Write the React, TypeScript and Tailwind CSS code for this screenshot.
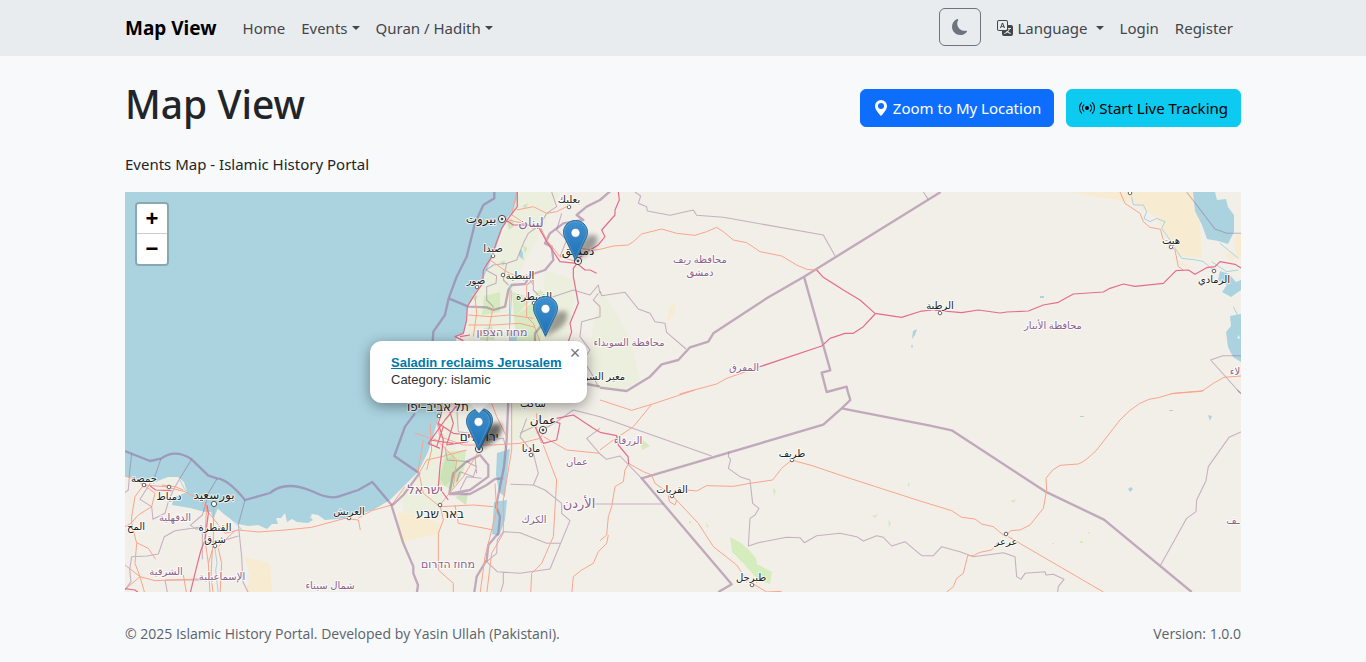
import { BsBroadcast, BsGeoAltFill, BsMoonFill, BsTranslate } from "react-icons/bs";

type Kind = "nation" | "admin" | "motorway" | "trunk" | "river";

const LINE_STYLE: Record<Kind, { stroke: string; width: number; opacity: number }> = {
  nation: { stroke: "#8f6390", width: 7, opacity: 0.5 },
  admin: { stroke: "#8f6390", width: 3.2, opacity: 0.45 },
  motorway: { stroke: "#e46d8c", width: 3.6, opacity: 1 },
  trunk: { stroke: "#f8a58c", width: 3, opacity: 1 },
  river: { stroke: "#aad3df", width: 3, opacity: 1 },
};

// Each sheet holds its lines at three units per screen pixel, from its own corner.
const SHEETS: { x: number; y: number; lines: [Kind, string][] }[] = [
  {
    x: 125,
    y: 390,
    lines: [
      ["admin", "M20 192L14 245L10 300L0 308M108 206L90 258L45 328L80 350L84 388L120 370L130 335L145 300L165 265L200 208M276 266L250 310L240 350L232 375L196 406L215 418L232 410L232 508M360 330L340 404L350 500L354 576L372 612M232 410L150 422L118 440L100 492L66 498L20 500L14 540L18 575L0 600M120 570L128 612M120 570L270 570M232 460L300 450L340 438"],
      ["trunk", "M0 258L30 268L56 285L120 290L180 305L235 335L245 360L300 430L340 420L400 426L480 420L560 412L660 385L700 390L706 420M700 384L740 362L800 345L840 290M110 285L150 290L175 300M245 345L240 450L250 520L255 612M266 350L265 460L262 480L250 520M56 285L30 320L20 380L20 400L35 460L30 520L45 560L90 572L190 568L290 565M56 285L90 310L80 350L40 375L18 400L0 410M0 525L45 560L10 590L0 600M35 458L70 475L92 508M45 560L60 612M175 555L185 612M280 470L300 450L330 422M280 475L290 520L285 612M262 480L258 560L265 612"],
      ["motorway", "M246 345L250 370L240 450L228 480L215 530L195 612M75 288L92 300L140 302M0 596L30 600L45 612"],
      ["river", "M270 475L276 520L272 540L280 612M165 270L180 300L230 330M440 396L470 370L520 358L560 380M350 420L345 412L300 370"],
      ["nation", "M0 183L75 213L108 206Q150 175 200 208L250 257L276 265Q310 268 360 330L435 309Q480 270 560 303Q610 328 640 320L700 300L742 276L800 345"],
    ],
  },
  {
    x: 360,
    y: 190,
    lines: [
      ["nation", "M403 6L403 25L370 45L345 100L320 200L290 260L266 325L255 375L220 425L218 455M266 325L325 350L380 352L400 360L435 350L445 300L455 285L495 282L510 255L555 240L580 210L575 170L555 160L570 130L610 100L670 90L650 75L680 50L720 30L755 0"],
      ["admin", "M445 285L430 270L440 220L400 225L378 240L410 258L408 280L380 290L380 330L400 350M440 220L470 210L490 160L505 130L540 105L560 70L590 50L575 6M605 70L590 120L620 150L600 200M500 285L520 270L520 300L545 325L580 320L640 300L690 315L715 285L720 310M715 310L700 330L720 350L720 380L665 395L660 440L690 480L670 510L700 560L715 590"],
      ["trunk", "M445 90L490 100L540 110L560 150L600 200L650 215M470 60L520 50L560 70L590 65L620 50M390 210L440 245L470 260L500 255L520 285M325 375L390 380L450 375L520 385M325 405L400 405L480 400L525 412M345 320L350 370L340 440M450 300L448 380L450 455M500 285L500 380L520 400L540 455M400 350L390 400L380 455M470 6L455 75L520 115M655 175L705 180L720 178M500 330L520 320L540 350"],
      ["motorway", "M472 6L472 50L445 85L425 115L410 155L395 200L370 240L368 280L340 320L322 350L320 390L310 430L285 440L310 452M430 85L460 105L500 105L535 110L560 155L600 215L650 220L675 240L690 240L710 250M655 215L640 235L640 260L655 340L630 400L635 425L625 455M775 6L778 30L765 60L765 75L725 120L735 140L715 165L690 180L655 205M300 440L330 435"],
      ["river", "M450 285L455 310L450 400M485 180L490 210"],
      ["nation", "M525 455L525 430L550 400L535 350M680 582L720 590"],
    ],
  },
  {
    x: 360,
    y: 390,
    lines: [
      ["nation", "M165 70L135 110L103 198L178 250L130 315L95 348L130 460L160 530L160 550L174 585L170 612M445 30L440 150L432 230L408 350L420 380L415 430L385 465L380 510L350 560L342 612M268 310L280 250L320 215L360 195L385 225L385 260L330 300L268 312L330 312L380 285L405 267L430 265"],
      ["admin", "M290 50L295 125L330 130M290 275L300 245L340 260L350 230L320 215M300 300L320 260L365 265M345 200L350 250M500 85L480 140L520 190L535 250L520 285L452 283M520 285L555 300L605 340L605 370L630 392L570 537L480 550L412 545L380 515L410 490L412 450L430 425L480 428L560 460L600 460M480 130L520 110L545 80M530 130L590 95L640 60L720 80M720 115L680 145L720 192M705 342L720 342M430 545L430 580L420 612M255 170L262 210L330 215M380 150L430 145L440 180"],
      ["trunk", "M230 90L240 140L310 165L400 165L480 160L540 145L550 130M180 245L200 210L245 200L320 180M165 130L230 150L290 210L280 290M190 150L175 240L190 310L240 350L340 345L400 350M355 185L310 260L260 320L240 345L250 390L235 430L235 540L280 580L280 612M285 345L295 400L375 415L400 420M405 280L410 360L375 500L360 612M455 40L455 180L430 330L430 430L395 490L380 612M550 165L590 270L580 440L545 520L515 550L512 612M550 140L620 180L720 190M745 435L740 460L715 485L700 520L665 540L640 560L635 612M530 70L530 120L545 160M210 100L215 180L200 240M365 40L350 90L370 170M395 40L410 80L440 140"],
      ["motorway", "M250 50L235 100L250 150L240 230L235 290L265 330M235 100L280 130L325 135L350 150M300 35L255 90L205 160L240 175M265 50L280 100L260 165L325 155M525 110L550 160L590 150L600 100L570 90M590 85L640 75L700 115L720 127M210 150L280 160M250 110L230 170"],
    ],
  },
  {
    x: 600,
    y: 190,
    lines: [
      ["nation", "M1022 6L612 260L500 325L340 430L325 455L270 472L235 510L185 523L150 560L80 603L0 593M612 260L691 541L665 548L680 606L740 590L742 600"],
      ["admin", "M105 6L122 18L115 40L140 50L142 63L210 76L280 60L290 76L370 82L670 135L705 197M0 303L5 317L75 307L115 357L150 370L165 395L195 400L200 427L258 477M970 6L985 28"],
      ["trunk", "M0 178L40 168L85 165L100 155L125 132L185 117L230 130L285 136L320 125L350 112L370 125L400 150L440 158L480 185L545 198L590 225L620 238L650 240M238 612L350 582L380 565L480 530"],
      ["motorway", "M650 240L670 262L730 300L780 330L825 370L905 382L955 366L960 365M825 372L790 410L760 430L735 430L690 445L665 468L480 530"],
    ],
  },
  {
    x: 600,
    y: 390,
    lines: [
      ["nation", "M742 0L751 30L725 55L670 104L125 265L395 583L355 606M725 55L990 107"],
      ["admin", "M0 80L335 198M387 185L385 200L392 208L385 235L420 260L450 270L458 340L477 355L465 375L450 385L445 468L475 458L560 442L600 443L613 458L650 437L720 430L770 440L790 453L830 437L850 442L875 468L915 455L965 497M0 342L190 342M0 192L20 208L60 198L125 265"],
      ["trunk", "M0 30L95 61L155 43L285 0M155 43L100 110L40 150L0 180M85 220L130 245L155 255L165 280L215 315L295 400L340 470L410 525L440 570L500 606L545 604M205 315L208 335L225 345L230 330M260 300L290 303L320 287L400 289L450 280L518 270L545 235L575 210L640 228L725 257L960 333M85 222L75 240L70 275L45 290L35 350L25 380L20 435L0 452"],
      ["motorway", "M0 127L50 137L55 165L84 200L86 222"],
    ],
  },
  {
    x: 920,
    y: 190,
    lines: [
      ["admin", "M800 6L885 117L920 130L963 130M963 497L908 497L872 510L963 612"],
      ["river", "M635 20L640 45L670 45L680 65L672 85L690 95L710 85L735 95L725 115L750 150L785 205L830 210L850 215L880 240M900 160L955 205M940 350L955 380M875 215L920 245L955 240"],
      ["trunk", "M600 6L615 40L660 70L670 95L690 112L722 118L728 145L765 180L775 230L790 240M752 611L845 604L880 580L912 562L963 558"],
      ["motorway", "M0 364L35 360L125 368L175 360L240 369L260 366L325 363L370 345L415 337L460 312L550 306L570 295L610 282L645 289L730 280L768 242L805 240L825 253L860 233L885 230L900 215L945 223L963 234"],
    ],
  },
  {
    x: 920,
    y: 390,
    lines: [
      ["nation", "M30 107L95 121L375 304L552 389L815 606"],
      ["admin", "M963 126L927 142L865 230L858 272L830 330L828 365L800 385L722 525M5 497L40 497L65 470L120 485L160 500L250 488L285 500L290 560L303 568L315 550L375 545L378 555L400 553L432 568L415 590L413 606M952 0L963 10"],
      ["trunk", "M852 2L760 10L715 23Q660 25 600 90L530 180Q495 215 475 222L420 226L398 240L378 265L380 300L370 355L330 405L300 420L272 422L260 435L250 435L220 410L185 402L165 387L125 382L95 362L0 333M265 440L550 606M235 455L215 480L180 487L160 497L143 497L130 550L110 565L100 590L80 606"],
    ],
  },
];

type Place = { x: number; y: number; t: string; size?: number; region?: boolean };

const PLACES: Place[] = [
  { x: 569, y: 203, t: "بعلبك" },
  { x: 481, y: 223, t: "بيروت", size: 12 },
  { x: 493, y: 252, t: "صيدا" },
  { x: 476, y: 284, t: "صور" },
  { x: 520, y: 279, t: "النبطية" },
  { x: 534, y: 300, t: "القنيطرة" },
  { x: 578, y: 255, t: "دمشق", size: 12 },
  { x: 531, y: 227, t: "لبنان", size: 13, region: true },
  { x: 502, y: 336, t: "מחוז הצפון", size: 11, region: true },
  { x: 629, y: 346, t: "محافظة السويداء", region: true },
  { x: 596, y: 380, t: "مغير السرحان" },
  { x: 700, y: 263, t: "محافظة ريف", region: true },
  { x: 700, y: 276, t: "دمشق", region: true },
  { x: 744, y: 371, t: "المفرق", region: true },
  { x: 940, y: 309, t: "الرطبة" },
  { x: 1053, y: 329, t: "محافظة الأنبار", region: true },
  { x: 1171, y: 244, t: "هيت" },
  { x: 1214, y: 283, t: "الرمادي" },
  { x: 1235, y: 375, t: "لاء", region: true },
  { x: 438, y: 411, t: "תל אביב–יפו", size: 12 },
  { x: 479, y: 441, t: "ירושלים", size: 12 },
  { x: 533, y: 407, t: "ساكب" },
  { x: 543, y: 424, t: "عمان", size: 12 },
  { x: 531, y: 452, t: "مادبا" },
  { x: 577, y: 465, t: "عمان", region: true },
  { x: 628, y: 444, t: "الزرقاء", region: true },
  { x: 425, y: 494, t: "ישראל", size: 13, region: true },
  { x: 440, y: 518, t: "באר שבע", size: 12 },
  { x: 448, y: 568, t: "מחוז הדרום", size: 11, region: true },
  { x: 579, y: 508, t: "الأردن", size: 13, region: true },
  { x: 534, y: 523, t: "الكرك", region: true },
  { x: 672, y: 493, t: "القريات" },
  { x: 792, y: 457, t: "طريف" },
  { x: 751, y: 581, t: "طبرجل" },
  { x: 1006, y: 545, t: "عرعر" },
  { x: 1233, y: 524, t: "ـف", region: true },
  { x: 144, y: 482, t: "جمصة" },
  { x: 169, y: 500, t: "دمياط" },
  { x: 214, y: 499, t: "بورسعيد", size: 12 },
  { x: 175, y: 521, t: "الدقهلية", region: true },
  { x: 215, y: 531, t: "القنطرة" },
  { x: 215, y: 543, t: "شرق" },
  { x: 136, y: 530, t: "المح" },
  { x: 166, y: 575, t: "الشرقية", region: true },
  { x: 222, y: 580, t: "الإسماعيلية", region: true },
  { x: 330, y: 589, t: "شمال سيناء", region: true },
  { x: 349, y: 515, t: "العريش" },
];

const TOWNS: [number, number][] = [
  [569, 207], [493, 256], [477, 287], [503, 275], [534, 303], [439, 416], [531, 455],
  [440, 505], [672, 496], [792, 460], [752, 585], [1006, 534], [940, 313], [1171, 247],
  [1214, 271], [1130, 193], [144, 485], [169, 487], [349, 518], [215, 546],
];

const CAPITALS: [number, number][] = [[502, 219], [578, 261], [543, 430], [479, 449]];

function BaseMap() {
  return (
    <svg
      viewBox="125 192 1116 400"
      preserveAspectRatio="xMinYMin slice"
      className="block h-full w-full"
      role="img"
      aria-label="Map of the Levant"
    >
      <rect x="125" y="192" width="1116" height="400" fill="#aad3df" />
      <path
        fill="#f2efe9"
        d="M518 190L517 207L507 218L502 230L497 245L492 258L488 267L484 277L477 290L472 300L467 307L467 320L464 333L457 335L456 340L442 410L438 420L432 440L428 452L418 472L410 480L390 500L373 510L360 514L349 518L325 520L318 515L312 514L310 517L313 520L308 523L297 522L292 519L287 522L285 513L281 518L276 518L278 524L272 524L267 529L258 525L248 526L238 524L225 515L217 508L213 512L205 512L190 508L172 505L173 498L187 492L184 482L178 477L168 477L155 482L142 481L125 476V592H1241V192Z"
      />
      <path fill="#ebf0d8" opacity=".7" d="M520 192L560 192L545 225L525 262L508 300L506 341L468 341L468 320L478 290L490 267L500 240ZM545 270L575 280L570 341L540 341ZM600 290L618 315L632 345L640 380L620 392L590 390L590 345ZM443 410L460 412L455 450L445 480L440 510L405 515L400 495L420 475L432 445ZM512 403L545 403L550 425L530 440L512 440Z" />
      <path fill="#cfe9b6" opacity=".8" d="M512 292L530 297L545 320L540 341L516 341ZM517 315L533 302L548 318L552 300L540 290ZM484 296L500 292L500 312L482 315ZM445 452L466 450L464 470L452 490L438 483Z" />
      <path fill="#c5deb0" opacity=".7" d="M470 292L478 296L475 302ZM480 330L492 326L495 340L480 340ZM445 460L454 455L456 475L445 486L440 478ZM452 470L462 473L457 485ZM455 497L468 493L466 505ZM507 222l5 -4l2 8l-5 4ZM523 245l4 3l-2 6ZM500 262l5 -2l-1 6ZM522 206l6 -3l-2 6Z" />
      <path fill="#d5edbd" d="M730 537L741 543L748 549L756 558L757 564L772 572L770 584L758 580L752 573L742 562L732 552Z" />
      <path fill="#f7ecd1" d="M398 512L420 516L442 524L438 534L400 542ZM244 557L270 563L272 592L246 592L250 575ZM669 309L676 301L675 313L667 322ZM1070 192L1194 192L1200 225L1202 258L1178 256L1155 216L1130 202L1070 192ZM1170 257L1200 270L1180 264ZM1222 250L1236 256L1232 262ZM1234 238L1241 234V262L1236 254Z" />
      <path fill="#aad3df" d="M1193 192L1215 192L1217 200L1226 199L1228 207L1234 215L1234 232L1228 244L1218 241L1207 239L1202 225L1195 211ZM1220 271L1229 274L1236 282L1241 280V290L1231 297L1222 292L1227 285L1218 280ZM1241 314L1230 316L1231 326L1226 332L1228 347L1233 357L1241 362ZM497 453L510 449L508 465L505 497L499 492L496 475ZM494 502L507 500L505 520L499 536L492 534ZM509 332L516 330L517 341H509ZM210 507L218 508L213 520ZM1040 296h4v2h-4ZM1128 489l3 -2l2 2l-3 3Z" />
      <path fill="#aad3df" d="M913 331l4 -2l-2 6l-3 4ZM911 345l2 0l-1 4ZM1208 415l4 1l-2 5ZM1080 416h4v1h-4ZM1169 410h4v1h-4ZM520 250l3 3l-1 6l-3 -3Z" />
      <path fill="#d9e8bd" d="M1010 501l6 -2l-2 4ZM908 482l2 3l-2 2ZM888 520l3 3l-2 5ZM872 516l6 -2l-3 4ZM1080 541h3v2h-3ZM1052 543h2v1h-2ZM1087 532l3 0l-1 2ZM706 523l3 3l-2 2ZM689 521h2v2h-2ZM773 488l3 3l-2 5ZM640 438l10 8l-8 4Z" />
      <path fill="#fff" opacity=".7" d="M1237 338l2 -3l1 4Z" />

      {SHEETS.map((s) => (
        <g key={`${s.x}-${s.y}`} transform={`translate(${s.x} ${s.y}) scale(0.33333)`} fill="none" strokeLinejoin="round">
          {s.lines.map(([kind, d]) => (
            <path
              key={d}
              d={d}
              stroke={LINE_STYLE[kind].stroke}
              strokeWidth={LINE_STYLE[kind].width}
              opacity={LINE_STYLE[kind].opacity}
            />
          ))}
        </g>
      ))}

      {TOWNS.map(([x, y]) => (
        <circle key={`${x}-${y}`} cx={x} cy={y} r="1.8" fill="#fff" stroke="#555" strokeWidth=".9" />
      ))}
      <circle cx="214" cy="504" r="2.6" fill="#fff" stroke="#555" />
      {CAPITALS.map(([x, y]) => (
        <g key={`${x}-${y}`} stroke="#444">
          <circle cx={x} cy={y} r="3.6" fill="#fff" />
          <circle cx={x} cy={y} r="1" fill="#444" />
        </g>
      ))}

      <g
        textAnchor="middle"
        stroke="#fff"
        strokeWidth="2"
        strokeOpacity=".75"
        strokeLinejoin="round"
        paintOrder="stroke"
        className="font-['Noto_Sans','DejaVu_Sans',sans-serif]"
      >
        {PLACES.map((p) => (
          <text key={`${p.t}-${p.x}`} x={p.x} y={p.y} fontSize={p.size ?? 10} fill={p.region ? "#8d618b" : "#222"}>
            {p.t}
          </text>
        ))}
      </g>
    </svg>
  );
}

function Marker({ className, label }: { className: string; label: string }) {
  return (
    <button type="button" aria-label={label} className={`absolute h-[41px] w-[25px] ${className}`}>
      <svg viewBox="0 0 25 41" className="h-full w-full overflow-visible" aria-hidden="true">
        <defs>
          <linearGradient id="pin" x1="0" y1="0" x2="0" y2="1">
            <stop offset="0" stopColor="#3e92cf" />
            <stop offset="1" stopColor="#1f6fb5" />
          </linearGradient>
          <filter id="soft" x="-50%" y="-50%" width="200%" height="200%">
            <feGaussianBlur stdDeviation="2.5" />
          </filter>
        </defs>
        <path d="M12 41L17 24Q24 12 34 16Q36 26 26 33Z" fill="#000" opacity=".35" filter="url(#soft)" />
        <path
          d="M12.5.5C5.6.5.5 5.8.5 12.3c0 3 1 5 2.300 7.700L12.500 40.300 22.200 20c1.300-2.700 2.300-4.700 2.300-7.700C24.500 5.800 19.400.5 12.500.5Z"
          fill="url(#pin)"
          stroke="#2e6c97"
        />
        <path
          d="M12.5 1.600C6.200 1.600 1.600 6.400 1.600 12.300c0 2.800.9 4.700 2.200 7.300L12.500 37.800l8.700-18.200c1.300-2.600 2.200-4.500 2.200-7.300C23.400 6.400 18.800 1.600 12.500 1.600Z"
          fill="none"
          stroke="#fff"
          strokeOpacity=".15"
        />
        <circle cx="12.500" cy="12.800" r="4.400" fill="#fff" stroke="#2e6c97" strokeOpacity=".6" strokeWidth=".8" />
      </svg>
    </button>
  );
}

function Caret() {
  return <span className="border-x-4 border-t-4 border-x-transparent border-t-current" aria-hidden="true" />;
}

const navItem = "flex items-center gap-1 p-2 text-[#41464b] hover:text-black";

export default function App() {
  return (
    <div className="min-h-screen bg-[#f8f9fa] font-['Noto_Sans',sans-serif] text-[15px] leading-6 text-[#212529]">
      <header className="bg-[#e9ecef]">
        <nav className="mx-auto flex max-w-[1140px] items-center px-3 py-2" aria-label="Main">
          <a href="#top" className="mr-[18px] text-[19px] leading-8 font-bold text-black">
            Map View
          </a>
          <div className="flex flex-1 items-center">
            <a href="#home" className={navItem}>Home</a>
            <button type="button" className={navItem}>Events<Caret /></button>
            <button type="button" className={navItem}>Quran / Hadith<Caret /></button>
          </div>
          <div className="flex items-center">
            <button
              type="button"
              aria-label="Toggle dark mode"
              className="mr-2 flex h-[38px] w-[42px] items-center justify-center self-start rounded-md border border-[#6c757d] text-[#6c757d]"
            >
              <BsMoonFill size={16} />
            </button>
            <button type="button" className={navItem}>
              <BsTranslate size={16} />
              <span className="mr-1">Language</span>
              <Caret />
            </button>
            <a href="#login" className={navItem}>Login</a>
            <a href="#register" className={navItem}>Register</a>
          </div>
        </nav>
      </header>

      <main className="mx-auto max-w-[1140px] px-3 pt-6">
        <div className="flex items-center justify-between">
          <h1 className="pb-2 text-[39px] leading-12 font-medium">Map View</h1>
          <div className="flex gap-3">
            <button type="button" className="flex h-[38px] items-center gap-1 rounded-md border border-[#0d6efd] bg-[#0d6efd] px-3 text-white">
              <BsGeoAltFill size={16} />
              Zoom to My Location
            </button>
            <button type="button" className="flex h-[38px] items-center gap-1 rounded-md border border-[#0dcaf0] bg-[#0dcaf0] px-3 text-black">
              <BsBroadcast size={16} />
              Start Live Tracking
            </button>
          </div>
        </div>
        <p className="mt-4 mb-4">Events Map - Islamic History Portal</p>

        <section aria-label="Events map" className="relative h-[400px] overflow-hidden">
          <BaseMap />

          <Marker className="top-[28px] left-[438px]" label="Event in Damascus" />
          <Marker className="top-[104px] left-[408px]" label="Event at Yarmouk" />
          <Marker className="top-[216px] left-[343px]" label="Event in Jerusalem" />
          <Marker className="top-[217px] left-[341px]" label="Saladin reclaims Jerusalem" />

          <div className="absolute top-[10px] left-[10px] flex flex-col rounded border-2 border-black/20 bg-clip-padding font-['Liberation_Sans',sans-serif] text-[22px] leading-[30px] font-bold text-black">
            <button type="button" aria-label="Zoom in" className="h-[30px] w-[30px] rounded-t-xs border-b border-[#ccc] bg-white">
              +
            </button>
            <button type="button" aria-label="Zoom out" className="h-[30px] w-[30px] rounded-b-xs bg-white">
              −
            </button>
          </div>

          <div role="dialog" aria-label="Event" className="absolute top-[149px] left-[245px] w-[217px]">
            <div className="relative rounded-xl bg-white pt-[13px] pr-6 pb-[15px] pl-[21px] font-['Liberation_Sans',sans-serif] text-[13px] leading-[17px] text-[#333] shadow-[0_3px_14px_rgba(0,0,0,0.4)]">
              <a href="#event" className="block font-bold whitespace-nowrap text-[#0078a8] underline">
                Saladin reclaims Jerusalem
              </a>
              Category: islamic
              <button
                type="button"
                aria-label="Close popup"
                className="absolute top-0 right-0 h-6 w-6 text-lg leading-6 text-[#757575]"
              >
                ×
              </button>
            </div>
            <svg viewBox="0 0 20 10" className="mx-auto block h-[10px] w-[20px]" aria-hidden="true">
              <path d="M0 0H20L10 10Z" fill="#fff" />
            </svg>
          </div>
        </section>
      </main>

      <footer className="mx-auto flex max-w-[1140px] justify-between px-3 pt-8 pb-4 font-['Open_Sans','Noto_Sans',sans-serif] text-[14px] leading-5 text-[#5c636a]">
        <span>© 2025 Islamic History Portal. Developed by Yasin Ullah (Pakistani).</span>
        <span>Version: 1.0.0</span>
      </footer>
    </div>
  );
}
